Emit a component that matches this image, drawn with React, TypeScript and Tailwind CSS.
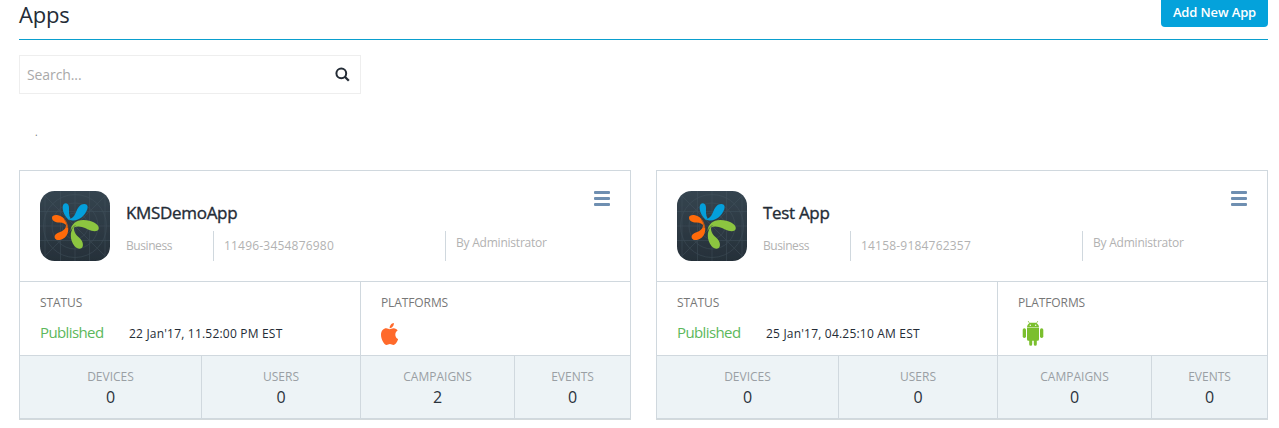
import { FaApple } from 'react-icons/fa';

type AppInfo = {
  name: string;
  id: string;
  published: string;
  platform: 'ios' | 'android';
  campaigns: number;
};

const apps: AppInfo[] = [
  { name: 'KMSDemoApp', id: '11496-3454876980', published: "22 Jan'17, 11.52:00 PM EST", platform: 'ios', campaigns: 2 },
  { name: 'Test App', id: '14158-9184762357', published: "25 Jan'17, 04.25:10 AM EST", platform: 'android', campaigns: 0 },
];

function AppLogo() {
  return (
    <svg className="size-[70px] shrink-0" viewBox="0 0 70 70">
      <defs>
        <linearGradient id="tile" x1="0" y1="0" x2="0" y2="1">
          <stop offset="0" stopColor="#364550" />
          <stop offset="1" stopColor="#26313a" />
        </linearGradient>
        <clipPath id="tileClip">
          <rect width="70" height="70" rx="14.5" />
        </clipPath>
      </defs>
      <rect width="70" height="70" rx="14.5" fill="url(#tile)" />
      <g clipPath="url(#tileClip)" fill="none" stroke="#465661" strokeWidth="0.7" opacity="0.6">
        <circle cx="35" cy="35" r="31.5" />
        <circle cx="35" cy="35" r="23" />
        <circle cx="35" cy="35" r="13" />
        <path d="M0 0 70 70M70 0 0 70M35 0V70M0 35H70M20.5 0V70M49.5 0V70M0 20.500H70M0 49.500H70M5 0V70M65 0V70" />
      </g>
      <path d="M28.500 28.500C25 25.500 22.300 20 22.700 16C23 13.200 24.400 12.200 26 12.300C28 12.500 29 14.500 29 17C29 21 28.700 24.500 30.700 27.500Z" fill="#049fdb" />
      <path d="M27.500 28.800C33 27.500 34.500 25 36.500 20C38.200 15.500 41 12.700 44.500 12.900C47.500 13.100 48.200 15.500 47.200 18.500C45 24.500 39 30 32.500 29.500C30.500 29.300 29 29 27.500 28.800Z" fill="#049fdb" />
      <path d="M27.300 36C26 33 23.500 31.800 19.500 31.600C15 31.300 12 29.500 12 26.700C12 24.700 14 23.800 17 24C22.500 24.500 27 29.500 27.300 36Z" fill="#ff6a0a" />
      <path d="M24.500 28C28 32 29.200 38 27.500 42.500C25.800 47 21.500 49.500 17.500 49C14.300 48.500 13.900 45.200 15.800 43.300C18.500 40.800 23.500 41 25.600 36.500C26.600 34 25.800 31 24.500 28Z" fill="#ff6a0a" />
      <path d="M30.500 40C31 33.500 36 29 43.500 29.100C51.500 29.300 58.700 33 58.800 37C58.800 40 55.500 41 51.500 39.800C46.500 38.200 43.500 35.700 38.500 35.600C34.500 35.600 32 37.500 30.500 40Z" fill="#8cc540" />
      <path d="M34 35.500C33.500 41 36 44 39.500 47C42.500 49.700 43.700 53.500 42.500 56C41 58.800 37 58 34.500 55C30 49.500 29.300 40.500 34 35.500Z" fill="#8cc540" />
      <path d="M30.700 40.500C31 37.800 33 35.800 35.500 34.500M24.500 28.500C26.500 31 27.500 34 27.200 37" fill="none" stroke="#2d3943" strokeWidth="0.5" />
    </svg>
  );
}

function AndroidIcon() {
  return (
    <svg className="ml-1 h-[25px] w-[22px]" viewBox="0 0 22 25" fill="#7bbf2e">
      <path d="M5 6.400C5 3.800 6.500 2.400 8.200 1.700H13.800C15.500 2.400 17 3.800 17 6.400Z" />
      <path d="M6.300.3 7.900 2.800M15.700.3 14.100 2.800" stroke="#7bbf2e" strokeWidth="0.7" strokeLinecap="round" />
      <circle cx="8.300" cy="4.200" r="0.7" fill="white" />
      <circle cx="13.700" cy="4.200" r="0.7" fill="white" />
      <path d="M5 7H17V18.200a1.500 1.500 0 0 1-1.500 1.500h-.7V23.300a1.500 1.500 0 0 1-3 0V19.700H10.200V23.300a1.500 1.500 0 0 1-3 0V19.700H6.500A1.500 1.500 0 0 1 5 18.200Z" />
      <rect x="0.700" y="7.300" width="3.300" height="9.600" rx="1.600" />
      <rect x="18" y="7.300" width="3.300" height="9.600" rx="1.600" />
    </svg>
  );
}

function Stat({ label, value, className }: { label: string; value: number; className: string }) {
  return (
    <div className={`border-[#d0d8de] pt-[11px] text-center ${className}`}>
      <div className="text-xs leading-5 text-[#9a9fa4]">{label}</div>
      <div className="text-base leading-5 text-[#2a323c]">{value}</div>
    </div>
  );
}

function AppCard({ app }: { app: AppInfo }) {
  return (
    <section className="w-[612px] border border-[#d0d8de] shadow-[0_1px_0_#d3d9db]">
      <header className="flex h-[111px] border-b border-[#d0d8de] px-5 pt-5">
        <AppLogo />
        <div className="ml-4 w-[468px] pt-2.5">
          <h2 className="h-[30px] text-[17px] leading-6 tracking-[-0.32px] text-[#242c36] [-webkit-text-stroke:0.35px_#242c36]">{app.name}</h2>
          <div className="flex h-[30px] text-xs leading-5 text-[#b2b2b2]">
            <span className="w-[87px] pt-[5px] tracking-[-0.42px]">Business</span>
            <span className="w-[232px] border-l border-[#d0d8de] pt-[5px] pl-2.5 tracking-[0.2px]">{app.id}</span>
            <span className="border-l border-[#d0d8de] pt-0.5 pl-2.5 tracking-[-0.22px]">By Administrator</span>
          </div>
        </div>
        <button aria-label="Menu" className="flex h-[15px] w-4 shrink-0 flex-col justify-between">
          <span className="h-[3px] w-full rounded-[1px] bg-[#6f8fb1]" />
          <span className="h-[3px] w-full rounded-[1px] bg-[#6f8fb1]" />
          <span className="h-[3px] w-full rounded-[1px] bg-[#6f8fb1]" />
        </button>
      </header>
      <div className="flex h-[74px] border-b border-[#d0d8de] text-xs text-[#777]">
        <div className="w-[341px] border-r border-[#d0d8de] pt-[11px] pl-5">
          <div className="leading-5 tracking-[-0.1px]">STATUS</div>
          <div className="mt-[7px] flex items-baseline leading-6">
            <span className="w-[89px] text-[15px] tracking-[-0.6px] text-[#5cb85c]">Published</span>
            <span className="tracking-[0.2px] text-[#242c36]">{app.published}</span>
          </div>
        </div>
        <div className="pt-[11px] pl-5">
          <div className="leading-5 tracking-[-0.1px]">PLATFORMS</div>
          <div className="mt-2 flex">
            {app.platform === 'ios' ? (
              <FaApple className="mt-0.5 h-[22px] w-[17px] text-[#ff6a2b]" preserveAspectRatio="none" viewBox="4 32 373 448" />
            ) : (
              <AndroidIcon />
            )}
          </div>
        </div>
      </div>
      <div className="flex h-[62px] bg-[#edf3f6]">
        <Stat label="DEVICES" value={0} className="w-[182px] border-r" />
        <Stat label="USERS" value={0} className="w-[159px] border-r" />
        <Stat label="CAMPAIGNS" value={app.campaigns} className="w-[154px] border-r" />
        <Stat label="EVENTS" value={0} className="w-[115px]" />
      </div>
    </section>
  );
}

export default function App() {
  return (
    <main className="h-[428px] overflow-hidden bg-white pr-[11px] pl-[19px] font-['Open_Sans','Noto_Sans',sans-serif]">
      <div className="flex h-10 items-start justify-between border-b border-[#0a9fce]">
        <h1 className="text-[22px] leading-[29px] tracking-[-0.2px] text-[#242c36]">Apps</h1>
        <button className="h-[27px] w-[107px] rounded-b-[4px] bg-[#04a2db] pb-[3px] text-[13px] leading-6 font-semibold tracking-[-0.13px] text-white">
          Add New App
        </button>
      </div>
      <div className="mt-[15px] flex h-[39px] w-[342px] items-center justify-between border border-[#eee] pr-2.5 pl-[7px]">
        <input
          className="w-60 text-sm tracking-[-0.1px] outline-none placeholder:text-[#a9a9a9]"
          placeholder="Search..."
        />
        <svg className="mb-px size-[15px]" viewBox="0 0 15 15" fill="none" stroke="#242c36" strokeWidth="2">
          <circle cx="6.300" cy="6.300" r="4.900" />
          <path d="m9.800 9.800 4 4" strokeWidth="2.300" />
        </svg>
      </div>
      <div className="mt-[30px] h-[46px] pl-4 text-[10px] leading-4 text-[#777]">.</div>
      <div className="flex gap-[25px]">
        {apps.map((app) => (
          <AppCard key={app.id} app={app} />
        ))}
      </div>
    </main>
  );
}
